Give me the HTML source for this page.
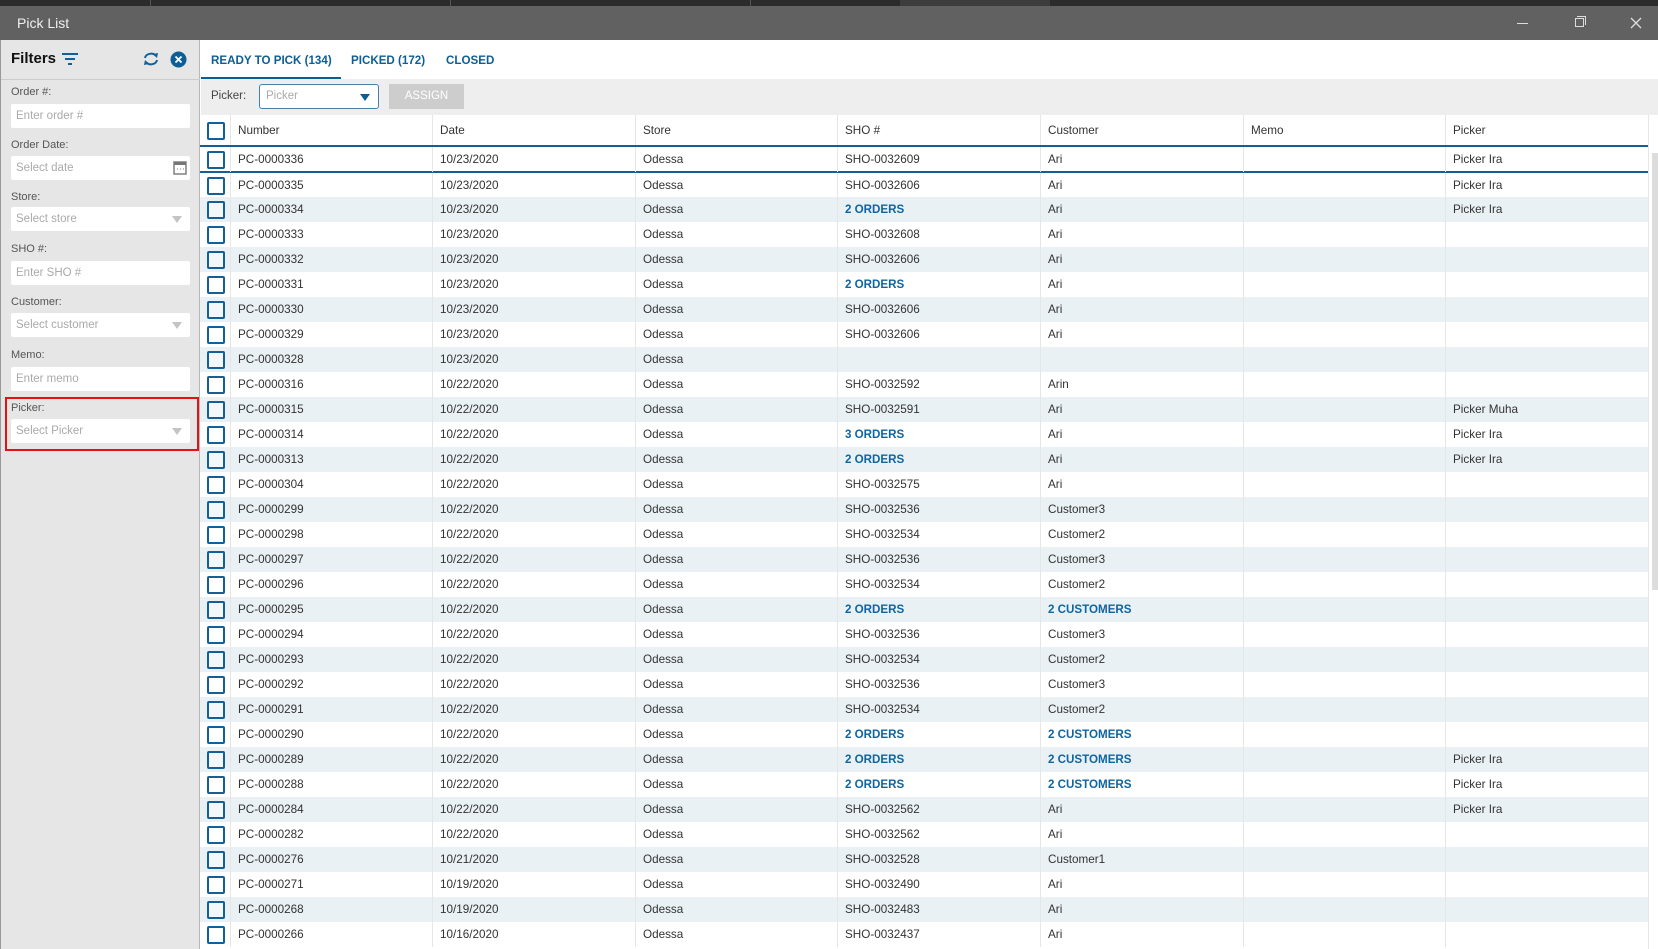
<!DOCTYPE html>
<html><head><meta charset="utf-8"><style>
*{box-sizing:border-box;margin:0;padding:0}
body{width:1658px;height:949px;overflow:hidden;background:#fff;font-family:"Liberation Sans",sans-serif;font-size:11.7px;color:#333;position:relative}
.a{position:absolute}
.top{left:0;top:0;width:1658px;height:6px;background:#2b2b2b}
.title{left:0;top:6px;width:1658px;height:34px;background:#616161;color:#f0f0f0;font-size:14px;line-height:34px;padding-left:17px}
.side{left:0;top:40px;width:200px;height:909px;background:#e6e6e6;border-right:1px solid #b8b8b8;border-left:1px solid #999}
.lbl{left:11px;color:#555;font-size:11px}
.inp{left:11px;width:179px;height:24px;background:#fff;border-radius:2px;color:#aaa;font-size:11.5px;line-height:24px;padding-left:5px}
.dd:after{content:"";position:absolute;right:8px;top:9px;border-left:5px solid transparent;border-right:5px solid transparent;border-top:7px solid #c4c4c4}
.tab{top:41px;height:39px;line-height:40px;color:#0d5e95;font-weight:bold;font-size:11.6px}
.tb{left:201px;top:79px;width:1457px;height:36px;background:#eeeeee}
.row{position:absolute;left:200px;width:1448px;height:25px;display:flex}
.row div{height:100%;border-left:1px solid #e6e6e6;line-height:25px;padding-left:7px;white-space:nowrap;overflow:hidden}
.row div:first-child{border-left:none;padding-left:0;position:relative}
.c0{width:30px}.c1{width:202px}.c2{width:203px}.c3{width:202px}.c4{width:203px}.c5{width:203px}.c6{width:202px}.c7{width:203px}
.s{background:#e9f1f5}
.cb{position:absolute;left:7px;top:4px;width:18px;height:18px;border:2px solid #135f97;border-radius:2px;background:#fff}
.s .cb{background:#f3f7f9}
.l{color:#0f65a0;font-weight:bold;font-size:11.6px}
</style></head><body>
<div class="a top"></div>
<div class="a" style="left:150px;top:0;width:1px;height:6px;background:#555"></div>
<div class="a" style="left:450px;top:0;width:1px;height:6px;background:#555"></div>
<div class="a" style="left:750px;top:0;width:1px;height:6px;background:#555"></div>
<div class="a" style="left:900px;top:0;width:150px;height:6px;background:#3c3c3c"></div>
<div class="a title">Pick List</div>
<div class="a" style="left:1517px;top:23px;width:11px;height:1px;background:#ddd"></div>
<div class="a" style="left:1575px;top:18px;width:9px;height:9px;border:1px solid #ddd"></div>
<div class="a" style="left:1577px;top:16px;width:9px;height:9px;border-top:1px solid #ddd;border-right:1px solid #ddd"></div>
<svg class="a" style="left:1630px;top:17px" width="12" height="12"><path d="M1 1L11 11M11 1L1 11" stroke="#ddd" stroke-width="1.3"/></svg>

<div class="a side"></div>
<div class="a" style="left:11px;top:50px;font-weight:bold;font-size:15px;color:#111">Filters</div>
<svg class="a" style="left:61px;top:52px" width="18" height="14"><path d="M1 2H17M4 7H14M7 12H11" stroke="#135f97" stroke-width="2"/></svg>
<svg class="a" style="left:142px;top:51px" width="18" height="16" viewBox="0 0 18 16"><path d="M3 7A6 5 0 0 1 14 5M15 9A6 5 0 0 1 4 11" fill="none" stroke="#135f97" stroke-width="2"/><path d="M11 3L16 2L15 7Z M7 13L2 14L3 9Z" fill="#135f97"/></svg>
<svg class="a" style="left:170px;top:51px" width="17" height="17"><circle cx="8.5" cy="8.5" r="8" fill="#0d5e95"/><path d="M5.5 5.5L11.5 11.5M11.5 5.5L5.5 11.5" stroke="#fff" stroke-width="1.8"/></svg>
<div class="a" style="left:1px;top:79px;width:199px;height:1px;background:#ccc"></div>
<div class="a lbl" style="top:86px">Order #:</div>
<div class="a inp" style="top:104px">Enter order #</div>
<div class="a lbl" style="top:139px">Order Date:</div>
<div class="a inp" style="top:156px">Select date</div>
<svg class="a" style="left:173px;top:160px" width="14" height="15"><rect x="1" y="2" width="12" height="12" fill="none" stroke="#777" stroke-width="1.4"/><rect x="1" y="2" width="12" height="3" fill="#777"/><path d="M4 9h1M7 9h1M10 9h1" stroke="#777"/></svg>
<div class="a lbl" style="top:191px">Store:</div>
<div class="a inp dd" style="top:207px">Select store</div>
<div class="a lbl" style="top:243px">SHO #:</div>
<div class="a inp" style="top:261px">Enter SHO #</div>
<div class="a lbl" style="top:296px">Customer:</div>
<div class="a inp dd" style="top:313px">Select customer</div>
<div class="a lbl" style="top:349px">Memo:</div>
<div class="a inp" style="top:367px">Enter memo</div>
<div class="a" style="left:5px;top:397px;width:194px;height:54px;border:2px solid #e81010"></div>
<div class="a lbl" style="top:402px">Picker:</div>
<div class="a inp dd" style="top:419px">Select Picker</div>

<div class="a tab" style="left:211px">READY TO PICK (134)</div>
<div class="a" style="left:201px;top:77px;width:140px;height:2px;background:#0d5e95"></div>
<div class="a tab" style="left:351px">PICKED (172)</div>
<div class="a tab" style="left:446px">CLOSED</div>
<div class="a tb"></div>
<div class="a" style="left:211px;top:90px;color:#444;font-size:11.5px">Picker:</div>
<div class="a" style="left:259px;top:84px;width:120px;height:25px;background:#fff;border:1px solid #4a7fa8;border-radius:3px;color:#aaa;font-size:11.5px;line-height:23px;padding-left:6px">Picker</div>
<div class="a" style="left:360px;top:94px;border-left:5px solid transparent;border-right:5px solid transparent;border-top:7px solid #0d5e95"></div>
<div class="a" style="left:389px;top:84px;width:75px;height:25px;background:#cdcdcd;color:#fff;font-size:11.5px;line-height:25px;text-align:center">ASSIGN</div>

<div class="row" style="top:115px;height:31px"><div class="c0"><span class="cb" style="top:7px"></span></div><div class="c1" style="line-height:31px">Number</div><div class="c2" style="line-height:31px">Date</div><div class="c3" style="line-height:31px">Store</div><div class="c4" style="line-height:31px">SHO #</div><div class="c5" style="line-height:31px">Customer</div><div class="c6" style="line-height:31px">Memo</div><div class="c7" style="line-height:31px">Picker</div></div>
<div class="a" style="left:200px;top:145px;width:1448px;height:2px;background:#135f97"></div>
<div class="a" style="left:200px;top:171px;width:1448px;height:2px;background:#135f97"></div>
<div class="a" style="left:1648px;top:115px;width:1px;height:834px;background:#e6e6e6"></div>
<div class="a" style="left:1652px;top:153px;width:6px;height:437px;background:#dcdcdc"></div>

<div class="row" style="top:147px"><div class="c0"><span class="cb"></span></div><div class="c1">PC-0000336</div><div class="c2">10/23/2020</div><div class="c3">Odessa</div><div class="c4">SHO-0032609</div><div class="c5">Ari</div><div class="c6"></div><div class="c7">Picker Ira</div></div>
<div class="row" style="top:173px"><div class="c0"><span class="cb"></span></div><div class="c1">PC-0000335</div><div class="c2">10/23/2020</div><div class="c3">Odessa</div><div class="c4">SHO-0032606</div><div class="c5">Ari</div><div class="c6"></div><div class="c7">Picker Ira</div></div>
<div class="row s" style="top:197px"><div class="c0"><span class="cb"></span></div><div class="c1">PC-0000334</div><div class="c2">10/23/2020</div><div class="c3">Odessa</div><div class="c4 l">2 ORDERS</div><div class="c5">Ari</div><div class="c6"></div><div class="c7">Picker Ira</div></div>
<div class="row" style="top:222px"><div class="c0"><span class="cb"></span></div><div class="c1">PC-0000333</div><div class="c2">10/23/2020</div><div class="c3">Odessa</div><div class="c4">SHO-0032608</div><div class="c5">Ari</div><div class="c6"></div><div class="c7"></div></div>
<div class="row s" style="top:247px"><div class="c0"><span class="cb"></span></div><div class="c1">PC-0000332</div><div class="c2">10/23/2020</div><div class="c3">Odessa</div><div class="c4">SHO-0032606</div><div class="c5">Ari</div><div class="c6"></div><div class="c7"></div></div>
<div class="row" style="top:272px"><div class="c0"><span class="cb"></span></div><div class="c1">PC-0000331</div><div class="c2">10/23/2020</div><div class="c3">Odessa</div><div class="c4 l">2 ORDERS</div><div class="c5">Ari</div><div class="c6"></div><div class="c7"></div></div>
<div class="row s" style="top:297px"><div class="c0"><span class="cb"></span></div><div class="c1">PC-0000330</div><div class="c2">10/23/2020</div><div class="c3">Odessa</div><div class="c4">SHO-0032606</div><div class="c5">Ari</div><div class="c6"></div><div class="c7"></div></div>
<div class="row" style="top:322px"><div class="c0"><span class="cb"></span></div><div class="c1">PC-0000329</div><div class="c2">10/23/2020</div><div class="c3">Odessa</div><div class="c4">SHO-0032606</div><div class="c5">Ari</div><div class="c6"></div><div class="c7"></div></div>
<div class="row s" style="top:347px"><div class="c0"><span class="cb"></span></div><div class="c1">PC-0000328</div><div class="c2">10/23/2020</div><div class="c3">Odessa</div><div class="c4"></div><div class="c5"></div><div class="c6"></div><div class="c7"></div></div>
<div class="row" style="top:372px"><div class="c0"><span class="cb"></span></div><div class="c1">PC-0000316</div><div class="c2">10/22/2020</div><div class="c3">Odessa</div><div class="c4">SHO-0032592</div><div class="c5">Arin</div><div class="c6"></div><div class="c7"></div></div>
<div class="row s" style="top:397px"><div class="c0"><span class="cb"></span></div><div class="c1">PC-0000315</div><div class="c2">10/22/2020</div><div class="c3">Odessa</div><div class="c4">SHO-0032591</div><div class="c5">Ari</div><div class="c6"></div><div class="c7">Picker Muha</div></div>
<div class="row" style="top:422px"><div class="c0"><span class="cb"></span></div><div class="c1">PC-0000314</div><div class="c2">10/22/2020</div><div class="c3">Odessa</div><div class="c4 l">3 ORDERS</div><div class="c5">Ari</div><div class="c6"></div><div class="c7">Picker Ira</div></div>
<div class="row s" style="top:447px"><div class="c0"><span class="cb"></span></div><div class="c1">PC-0000313</div><div class="c2">10/22/2020</div><div class="c3">Odessa</div><div class="c4 l">2 ORDERS</div><div class="c5">Ari</div><div class="c6"></div><div class="c7">Picker Ira</div></div>
<div class="row" style="top:472px"><div class="c0"><span class="cb"></span></div><div class="c1">PC-0000304</div><div class="c2">10/22/2020</div><div class="c3">Odessa</div><div class="c4">SHO-0032575</div><div class="c5">Ari</div><div class="c6"></div><div class="c7"></div></div>
<div class="row s" style="top:497px"><div class="c0"><span class="cb"></span></div><div class="c1">PC-0000299</div><div class="c2">10/22/2020</div><div class="c3">Odessa</div><div class="c4">SHO-0032536</div><div class="c5">Customer3</div><div class="c6"></div><div class="c7"></div></div>
<div class="row" style="top:522px"><div class="c0"><span class="cb"></span></div><div class="c1">PC-0000298</div><div class="c2">10/22/2020</div><div class="c3">Odessa</div><div class="c4">SHO-0032534</div><div class="c5">Customer2</div><div class="c6"></div><div class="c7"></div></div>
<div class="row s" style="top:547px"><div class="c0"><span class="cb"></span></div><div class="c1">PC-0000297</div><div class="c2">10/22/2020</div><div class="c3">Odessa</div><div class="c4">SHO-0032536</div><div class="c5">Customer3</div><div class="c6"></div><div class="c7"></div></div>
<div class="row" style="top:572px"><div class="c0"><span class="cb"></span></div><div class="c1">PC-0000296</div><div class="c2">10/22/2020</div><div class="c3">Odessa</div><div class="c4">SHO-0032534</div><div class="c5">Customer2</div><div class="c6"></div><div class="c7"></div></div>
<div class="row s" style="top:597px"><div class="c0"><span class="cb"></span></div><div class="c1">PC-0000295</div><div class="c2">10/22/2020</div><div class="c3">Odessa</div><div class="c4 l">2 ORDERS</div><div class="c5 l">2 CUSTOMERS</div><div class="c6"></div><div class="c7"></div></div>
<div class="row" style="top:622px"><div class="c0"><span class="cb"></span></div><div class="c1">PC-0000294</div><div class="c2">10/22/2020</div><div class="c3">Odessa</div><div class="c4">SHO-0032536</div><div class="c5">Customer3</div><div class="c6"></div><div class="c7"></div></div>
<div class="row s" style="top:647px"><div class="c0"><span class="cb"></span></div><div class="c1">PC-0000293</div><div class="c2">10/22/2020</div><div class="c3">Odessa</div><div class="c4">SHO-0032534</div><div class="c5">Customer2</div><div class="c6"></div><div class="c7"></div></div>
<div class="row" style="top:672px"><div class="c0"><span class="cb"></span></div><div class="c1">PC-0000292</div><div class="c2">10/22/2020</div><div class="c3">Odessa</div><div class="c4">SHO-0032536</div><div class="c5">Customer3</div><div class="c6"></div><div class="c7"></div></div>
<div class="row s" style="top:697px"><div class="c0"><span class="cb"></span></div><div class="c1">PC-0000291</div><div class="c2">10/22/2020</div><div class="c3">Odessa</div><div class="c4">SHO-0032534</div><div class="c5">Customer2</div><div class="c6"></div><div class="c7"></div></div>
<div class="row" style="top:722px"><div class="c0"><span class="cb"></span></div><div class="c1">PC-0000290</div><div class="c2">10/22/2020</div><div class="c3">Odessa</div><div class="c4 l">2 ORDERS</div><div class="c5 l">2 CUSTOMERS</div><div class="c6"></div><div class="c7"></div></div>
<div class="row s" style="top:747px"><div class="c0"><span class="cb"></span></div><div class="c1">PC-0000289</div><div class="c2">10/22/2020</div><div class="c3">Odessa</div><div class="c4 l">2 ORDERS</div><div class="c5 l">2 CUSTOMERS</div><div class="c6"></div><div class="c7">Picker Ira</div></div>
<div class="row" style="top:772px"><div class="c0"><span class="cb"></span></div><div class="c1">PC-0000288</div><div class="c2">10/22/2020</div><div class="c3">Odessa</div><div class="c4 l">2 ORDERS</div><div class="c5 l">2 CUSTOMERS</div><div class="c6"></div><div class="c7">Picker Ira</div></div>
<div class="row s" style="top:797px"><div class="c0"><span class="cb"></span></div><div class="c1">PC-0000284</div><div class="c2">10/22/2020</div><div class="c3">Odessa</div><div class="c4">SHO-0032562</div><div class="c5">Ari</div><div class="c6"></div><div class="c7">Picker Ira</div></div>
<div class="row" style="top:822px"><div class="c0"><span class="cb"></span></div><div class="c1">PC-0000282</div><div class="c2">10/22/2020</div><div class="c3">Odessa</div><div class="c4">SHO-0032562</div><div class="c5">Ari</div><div class="c6"></div><div class="c7"></div></div>
<div class="row s" style="top:847px"><div class="c0"><span class="cb"></span></div><div class="c1">PC-0000276</div><div class="c2">10/21/2020</div><div class="c3">Odessa</div><div class="c4">SHO-0032528</div><div class="c5">Customer1</div><div class="c6"></div><div class="c7"></div></div>
<div class="row" style="top:872px"><div class="c0"><span class="cb"></span></div><div class="c1">PC-0000271</div><div class="c2">10/19/2020</div><div class="c3">Odessa</div><div class="c4">SHO-0032490</div><div class="c5">Ari</div><div class="c6"></div><div class="c7"></div></div>
<div class="row s" style="top:897px"><div class="c0"><span class="cb"></span></div><div class="c1">PC-0000268</div><div class="c2">10/19/2020</div><div class="c3">Odessa</div><div class="c4">SHO-0032483</div><div class="c5">Ari</div><div class="c6"></div><div class="c7"></div></div>
<div class="row" style="top:922px"><div class="c0"><span class="cb"></span></div><div class="c1">PC-0000266</div><div class="c2">10/16/2020</div><div class="c3">Odessa</div><div class="c4">SHO-0032437</div><div class="c5">Ari</div><div class="c6"></div><div class="c7"></div></div>
</body></html>
